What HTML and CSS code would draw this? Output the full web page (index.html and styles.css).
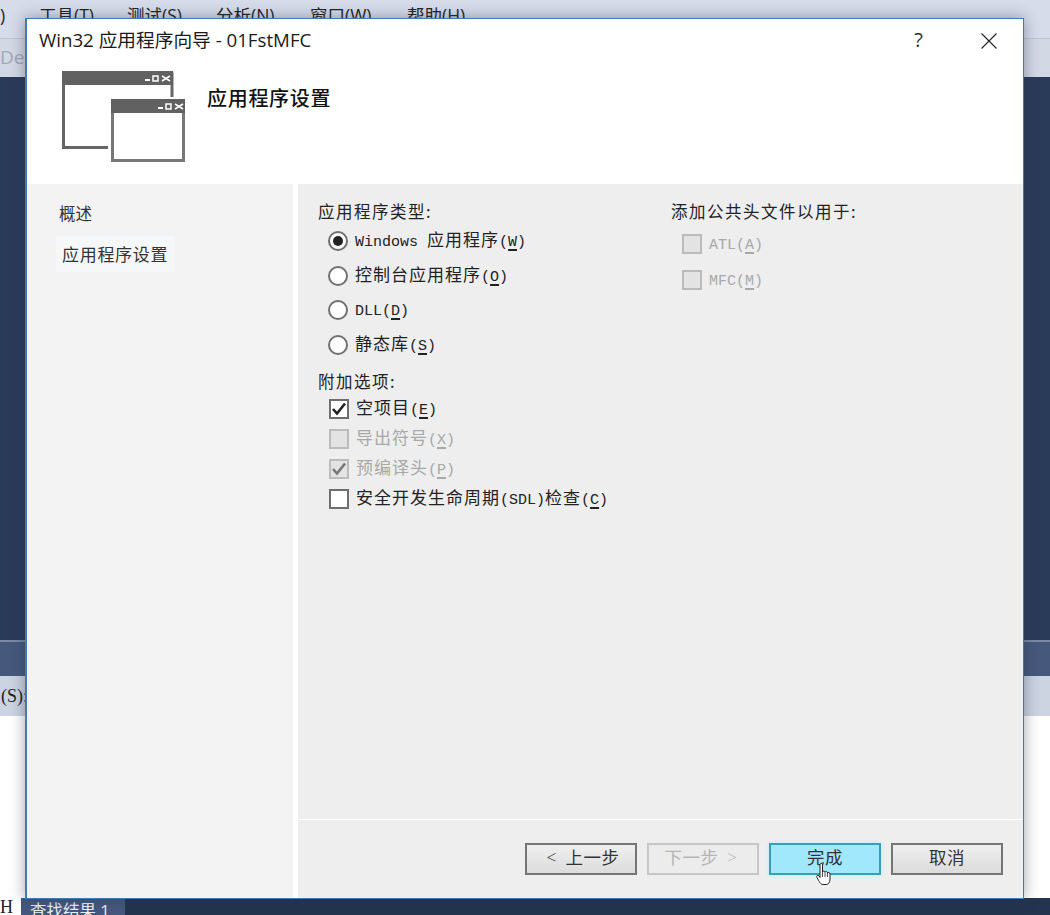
FILE: index.html
```html
<!DOCTYPE html>
<html lang="zh-CN">
<head>
<meta charset="utf-8">
<title>Win32 应用程序向导</title>
<link rel="stylesheet" href="styles.css">
</head>
<body>
<div class="ide">
  <div class="menubar">
    <span class="m0">)</span><span class="mi w88">工具(T)</span><span class="mi w89">测试(S)</span><span class="mi w94">分析(N)</span><span class="mi w97">窗口(W)</span><span class="mi">帮助(H)</span>
  </div>
  <div class="toolbar"><span class="del">Del</span></div>
  <div class="editor"></div>
  <div class="panelhead"></div>
  <div class="findbar">(S):</div>
  <div class="output"></div>
  <div class="tabs"><span class="h">H</span><span class="tab">查找结果 1</span></div>
</div>

<div class="dialog">
  <div class="titlebar">
    <div class="title">Win32 应用程序向导 - 01FstMFC</div>
    <div class="help">?</div>
    <svg class="close" width="16" height="16" viewBox="0 0 16 16"><path d="M0.5 0.5L15.5 15.5M15.5 0.5L0.5 15.5" stroke="#222" stroke-width="1.1" fill="none"/></svg>
  </div>
  <div class="banner">
    <svg class="logo" width="125" height="92" viewBox="0 0 125 92">
      <path d="M1.500 3V76.500H46M1.500 3H110V26" fill="none" stroke="#666" stroke-width="3"/>
      <rect x="0" y="0" width="111" height="14" fill="#616161"/>
      <rect x="83" y="8" width="5" height="2" fill="#fff"/><rect x="91" y="5" width="5" height="5" fill="none" stroke="#fff" stroke-width="1.500"/><path d="M100 5L108 10M108 5L100 10" stroke="#fff" stroke-width="1.500"/>
      <rect x="50.500" y="29.500" width="71" height="60" fill="#fff" stroke="#777" stroke-width="3"/>
      <rect x="49" y="28" width="74" height="14" fill="#616161"/>
      <rect x="96" y="36" width="5" height="2" fill="#fff"/><rect x="104" y="33" width="5" height="5" fill="none" stroke="#fff" stroke-width="1.500"/><path d="M113 33L121 38M121 33L113 38" stroke="#fff" stroke-width="1.500"/>
    </svg>
    <div class="heading">应用程序设置</div>
  </div>
  <div class="content">
    <nav class="steps">
      <div class="step">概述</div>
      <div class="step current">应用程序设置</div>
    </nav>
    <div class="gutter"></div>
    <div class="mainpane">
      <div class="settings">
        <div class="col-left">
          <div class="group-label">应用程序类型:</div>
          <div class="radios">
            <div class="opt"><span class="radio on"></span><span class="txt"><span class="lat">Windows </span>应用程序<span class="lat">(<u>W</u>)</span></span></div>
            <div class="opt"><span class="radio"></span><span class="txt">控制台应用程序<span class="lat">(<u>O</u>)</span></span></div>
            <div class="opt"><span class="radio"></span><span class="txt"><span class="lat">DLL(<u>D</u>)</span></span></div>
            <div class="opt"><span class="radio"></span><span class="txt">静态库<span class="lat">(<u>S</u>)</span></span></div>
          </div>
          <div class="group-label second">附加选项:</div>
          <div class="checks">
            <div class="chk"><span class="box"><svg width="16" height="14" viewBox="0 0 16 14"><path d="M2 7L6 11.500L14 1.500" fill="none" stroke="#222" stroke-width="2.600"/></svg></span><span class="txt">空项目<span class="lat">(<u>E</u>)</span></span></div>
            <div class="chk off"><span class="box"></span><span class="txt">导出符号<span class="lat">(<u>X</u>)</span></span></div>
            <div class="chk off"><span class="box"><svg width="16" height="14" viewBox="0 0 16 14"><path d="M2 7L6 11.500L14 1.500" fill="none" stroke="#777" stroke-width="2.600"/></svg></span><span class="txt">预编译头<span class="lat">(<u>P</u>)</span></span></div>
            <div class="chk"><span class="box"></span><span class="txt">安全开发生命周期<span class="lat">(SDL)</span>检查<span class="lat">(<u>C</u>)</span></span></div>
          </div>
        </div>
        <div class="col-right">
          <div class="group-label">添加公共头文件以用于:</div>
          <div class="headers">
            <div class="chk off"><span class="box"></span><span class="txt"><span class="lat">ATL(<u>A</u>)</span></span></div>
            <div class="chk off"><span class="box"></span><span class="txt"><span class="lat">MFC(<u>M</u>)</span></span></div>
          </div>
        </div>
      </div>
      <div class="footer">
        <div class="btn"><span class="chev">&lt;</span> 上一步</div>
        <div class="btn disabled">下一步 <span class="chev">&gt;</span></div>
        <div class="btn hot">完成
          <svg class="cursor" width="18" height="24" viewBox="0 0 18 24"><path d="M5 2.500C5 1 7.500 1 7.500 2.500V10C8 8.500 10 8.800 10 10.300C10.500 9 12.500 9.300 12.500 11C13 10 15 10.300 15 12V17C15 20 13.500 22.500 11 22.500H8C5.500 22.500 4.500 20 2 15.500C1 13.500 3 12.500 4 14L5 15.500Z" fill="#fff" stroke="#222" stroke-width="1"/><path d="M7.500 10V15M10 10.500V15M12.500 11V15" stroke="#222" stroke-width=".8"/></svg>
        </div>
        <div class="btn">取消</div>
      </div>
    </div>
  </div>
</div>
</body>
</html>
```
FILE: styles.css
```css
* { box-sizing: border-box; }
html, body { margin: 0; padding: 0; }
body {
  width: 1050px;
  height: 915px;
  overflow: hidden;
  position: relative;
  font-family: "Noto Sans CJK SC", sans-serif;
  color: #1c1c1c;
}
.ide { display: flex; flex-direction: column; height: 915px; }
.menubar {
  height: 38px;
  background: #d6dcea;
  font-size: 17.500px;
  color: #222;
  display: flex;
  padding-top: 3px;
  line-height: 24px;
  font-family: "Open Sans", "Noto Sans CJK SC", sans-serif;
}
.m0 { width: 39px; }
.mi { width: 92px; }
.w88 { width: 88px; }
.w89 { width: 89px; }
.w94 { width: 94px; }
.w97 { width: 97px; }
.toolbar {
  height: 39px;
  background: #d3d8e5;
  border-top: 1px solid #bfc5d4;
  padding-top: 6px;
  font: 19px/24px "Open Sans", sans-serif;
  color: #a3a8b2;
}
.editor { height: 565px; background: #2a3b59; border-bottom: 2px solid #7a8aa3; }
.panelhead { height: 34px; background: #46587c; }
.findbar {
  height: 40px;
  background: #ccd3e1;
  font: 18px/40px "Liberation Serif", serif;
  color: #222;
  padding-left: 1px;
}
.output { height: 182px; background: #fff; }
.tabs {
  height: 17px;
  background: #24344f;
  display: flex;
  overflow: hidden;
  position: relative;
}
.h {
  width: 21px;
  background: #fff;
  color: #222;
  font: 18px/18px "Liberation Serif", serif;
}
.tab {
  width: 104px;
  background: #45587d;
  color: #eef1f6;
  font: 16.500px/26px "Open Sans", "Noto Sans CJK SC", sans-serif;
  padding-left: 9px;
}

.dialog {
  position: absolute;
  left: 25px;
  top: 18px;
  width: 999px;
  height: 881px;
  background: #fff;
  border: 1px solid #3f7cb4;
  border-left-width: 2px;
  box-shadow: 0 0 14px rgba(40, 50, 70, .45);
  display: flex;
  flex-direction: column;
}
.titlebar {
  height: 44px;
  flex: none;
  display: flex;
  align-items: center;
  padding: 0 26px 2px 12px;
}
.title { flex: 1; font: 18.700px/24px "Open Sans", "Noto Sans CJK SC", sans-serif; color: #1a1a1a; }
.help { font: 20px/24px "Open Sans", sans-serif; margin-right: 58px; color: #333; }
.close { display: block; margin-top: 2px; }
.banner { height: 121px; flex: none; display: flex; padding: 8px 0 0 35px; }
.logo { display: block; flex: none; }
.heading { font-size: 20px; font-weight: 500; line-height: 26px; margin: 14px 0 0 20px; color: #111; letter-spacing: .7px; }
.content { flex: 1; display: flex; min-height: 0; }
.steps { width: 266px; flex: none; background: #f3f3f3; padding: 17px 0 0 32px; }
.step { font-size: 16.500px; line-height: 24px; height: 24px; color: #333; }
.current {
  margin: 11px 0 0 -3px;
  padding: 0 3px 0 6px;
  width: 119px;
  height: 36px;
  line-height: 36px;
  background: #f6f7f8;
  white-space: nowrap;
  font-size: 17px;
  letter-spacing: .7px;
}
.gutter { width: 5px; flex: none; background: #fff; }
.mainpane { flex: 1; display: flex; flex-direction: column; background: #eee; }
.settings { height: 636px; flex: none; display: flex; padding: 15px 0 0 20px; border-bottom: 1px solid #fff; }
.col-left { width: 353px; flex: none; }
.group-label { font-size: 16.500px; line-height: 24px; letter-spacing: 1.500px; color: #222; white-space: nowrap; }
.second { margin-top: 7px; }
.radios { padding-left: 10px; margin-top: 1px; }
.opt, .chk {
  display: flex;
  align-items: center;
  font-size: 17px;
  letter-spacing: 1px;
  color: #222;
  white-space: pre;
}
.txt { display: block; line-height: 24px; }
.opt { height: 34.500px; }
.chk { height: 30px; }
.checks { padding-left: 11px; margin-top: 1px; }
.headers { padding-left: 11px; margin-top: 3px; }
.headers .chk { height: 36px; }
.lat { font: 15px/24px "Liberation Mono", monospace; letter-spacing: 0; }
.lat u { text-underline-offset: 3px; text-decoration-thickness: 1.500px; }
.radio {
  width: 20px;
  height: 20px;
  border-radius: 50%;
  background: #fff;
  border: 2px solid #707070;
  margin-right: 7px;
  flex: none;
  position: relative;
}
.radio.on::after {
  content: "";
  position: absolute;
  left: 3px;
  top: 3px;
  width: 10px;
  height: 10px;
  border-radius: 50%;
  background: #222;
}
.box {
  width: 20px;
  height: 20px;
  background: #fff;
  border: 2px solid #6e6e6e;
  margin-right: 7px;
  flex: none;
  display: flex;
  align-items: center;
  justify-content: center;
}
.off { color: #a8a8a8; }
.off .box { background: #e3e3e3; border-color: #bbb; }
.footer { flex: 1; display: flex; align-items: flex-start; justify-content: flex-end; gap: 10px; padding: 23px 20px 0 0; }
.btn {
  width: 112px;
  height: 32px;
  border: 2px solid #757575;
  background: linear-gradient(#efefef, #dcdcdc);
  text-align: center;
  font-size: 17.500px;
  line-height: 23px;
  color: #333;
  letter-spacing: .5px;
  position: relative;
}
.chev { font-family: "Open Sans", sans-serif; font-weight: 300; margin: 0 4px; }
.disabled { border-color: #c6c6c6; color: #b5b5b5; background: #ececec; }
.hot { border-color: #3d9db6; background: #a1e8fd; box-shadow: 0 0 4px #b9ecfa; }
.cursor { position: absolute; left: 44px; top: 17px; }
```
